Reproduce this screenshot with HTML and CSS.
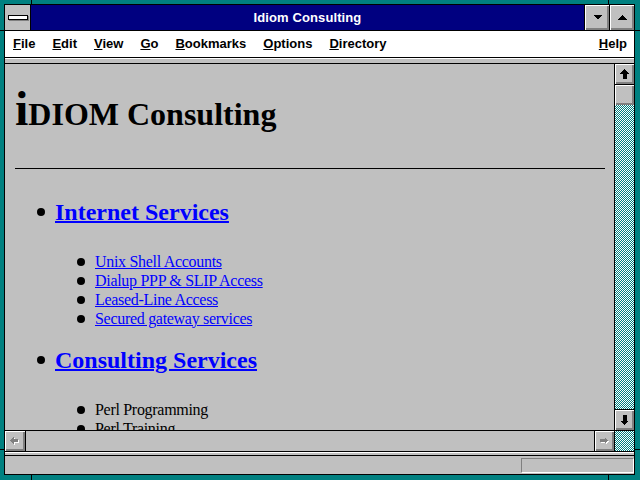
FILE: index.html
```html
<!DOCTYPE html>
<html lang="en">
<head>
  <meta charset="UTF-8">
  <title>Idiom Consulting</title>
  <link rel="stylesheet" href="styles.css">
</head>
<body>
  <svg class="defs" width="0" height="0">
    <defs>
      <pattern id="dither" width="2" height="2" patternUnits="userSpaceOnUse">
        <rect width="2" height="2" fill="#fff"/>
        <rect x="1" y="0" width="1" height="1" fill="#008080"/>
        <rect x="0" y="1" width="1" height="1" fill="#008080"/>
      </pattern>
    </defs>
  </svg>
  <div class="window">
    <div class="frame">
      <div class="titlebar">
        <div class="sysmenu"><span class="sysbar"></span></div>
        <div class="title">Idiom Consulting</div>
        <div class="tbtn raised">
          <svg width="9" height="5" viewBox="0 0 9 5" shape-rendering="crispEdges"><polygon points="0,0 9,0 4.5,4.5" fill="#000"/></svg>
        </div>
        <div class="tbtn raised">
          <svg width="9" height="5" viewBox="0 0 9 5" shape-rendering="crispEdges"><polygon points="4.5,0 9,4.5 0,4.5" fill="#000"/></svg>
        </div>
      </div>
      <div class="menubar">
        <span><u>F</u>ile</span>
        <span><u>E</u>dit</span>
        <span><u>V</u>iew</span>
        <span><u>G</u>o</span>
        <span><u>B</u>ookmarks</span>
        <span><u>O</u>ptions</span>
        <span><u>D</u>irectory</span>
        <span class="help"><u>H</u>elp</span>
      </div>
      <div class="band"></div>
      <div class="main">
        <div class="page">
          <h1><span class="big">i</span>DIOM Consulting</h1>
          <hr>
          <ul class="services">
            <li>
              <h2 class="svc"><a href="#">Internet Services</a></h2>
              <ul class="sub">
                <li><a href="#">Unix Shell Accounts</a></li>
                <li><a href="#">Dialup PPP &amp; SLIP Access</a></li>
                <li><a href="#">Leased-Line Access</a></li>
                <li><a href="#">Secured gateway services</a></li>
              </ul>
            </li>
            <li>
              <h2 class="svc"><a href="#">Consulting Services</a></h2>
              <ul class="sub">
                <li>Perl Programming</li>
                <li>Perl Training</li>
                <li>Web Page Design</li>
              </ul>
            </li>
          </ul>
        </div>
        <div class="vscroll">
          <div class="sbtn raised up">
            <svg width="9" height="10" viewBox="0 0 9 10" shape-rendering="crispEdges"><polygon points="4.5,0 9,4.5 6.5,4.5 6.5,10 2.5,10 2.5,4.5 0,4.5" fill="#000"/></svg>
          </div>
          <div class="thumb raised"></div>
          <svg class="track"><rect width="100%" height="100%" fill="url(#dither)"/></svg>
          <div class="sbtn raised down">
            <svg width="9" height="10" viewBox="0 0 9 10" shape-rendering="crispEdges"><polygon points="2.5,0 6.5,0 6.5,5.5 9,5.5 4.5,10 0,5.5 2.5,5.5" fill="#000"/></svg>
          </div>
        </div>
      </div>
      <div class="hscroll">
        <div class="sbtn raised left">
          <svg width="10" height="9" viewBox="0 0 10 9" shape-rendering="crispEdges">
            <polygon points="1,4.5 4.5,1 4.5,3 9,3 9,6 4.5,6 4.5,8" fill="#fff"/>
            <polygon points="0,3.5 3.5,0 3.5,2 8,2 8,5 3.5,5 3.5,7" fill="#808080"/>
          </svg>
        </div>
        <div class="htrack"></div>
        <div class="sbtn raised right">
          <svg width="10" height="9" viewBox="0 0 10 9" shape-rendering="crispEdges">
            <polygon points="9,4.5 5.5,1 5.5,3 1,3 1,6 5.5,6 5.5,8" fill="#fff"/>
            <polygon points="8,3.5 4.5,0 4.5,2 0,2 0,5 4.5,5 4.5,7" fill="#808080"/>
          </svg>
        </div>
        <div class="corner"><svg class="fill"><rect width="100%" height="100%" fill="url(#dither)"/></svg></div>
      </div>
      <div class="band2"></div>
      <div class="status"><div class="well"></div></div>
    </div>
  </div>
</body>
</html>
```

FILE: styles.css
```css
*{
  margin: 0;
  padding: 0;
  box-sizing: border-box;
}
body{
  background: #008080;
  font-family: "Liberation Sans", Arial, sans-serif;
  color: #000;
}
.defs{
  display: block;
  width: 0;
  height: 0;
}
/* teal frame with the little resize notches */
.window{
  width: 640px;
  height: 480px;
  padding: 4px 5px 5px 4px;
  background:
    linear-gradient(#000,#000) 31px 0/1px 4px no-repeat,
    linear-gradient(#000,#000) 608px 0/1px 4px no-repeat,
    linear-gradient(#000,#000) 31px 475px/1px 5px no-repeat,
    linear-gradient(#000,#000) 608px 475px/1px 5px no-repeat,
    linear-gradient(#000,#000) 0 30px/4px 1px no-repeat,
    linear-gradient(#000,#000) 0 449px/4px 1px no-repeat,
    linear-gradient(#000,#000) 635px 30px/5px 1px no-repeat,
    linear-gradient(#000,#000) 635px 449px/5px 1px no-repeat,
    #008080;
}
.frame{
  height: 100%;
  border: 1px solid #000;
  background: #c0c0c0;
  display: flex;
  flex-direction: column;
}
.raised{
  background: #c0c0c0;
  box-shadow: inset 1px 1px 0 #fff, inset -1px -1px 0 #808080, inset -2px -2px 0 #808080;
}
.titlebar{
  height: 26px;
  flex: none;
  display: flex;
  border-bottom: 1px solid #000;
}
.sysmenu{
  width: 26px;
  border-right: 1px solid #000;
  background: #c0c0c0;
  display: flex;
  align-items: center;
  justify-content: center;
}
.sysbar{
  width: 20px;
  height: 5px;
  background: #fff;
  border: 1px solid #000;
  box-shadow: 1px 1px 0 #808080;
}
.title{
  flex: 1;
  background: #000080;
  color: #fff;
  font-weight: bold;
  font-size: 13px;
  line-height: 25px;
  text-align: center;
  letter-spacing: 0.1px;
}
.tbtn{
  width: 25px;
  border-left: 1px solid #000;
  display: flex;
  align-items: center;
  justify-content: center;
}
.menubar{
  height: 27px;
  flex: none;
  background: #fff;
  border-bottom: 1px solid #000;
  display: flex;
  gap: 17px;
  padding: 0 7px 0 8px;
  font-weight: bold;
  font-size: 13px;
  line-height: 26px;
}
.menubar .help{
  margin-left: auto;
}
.band{
  height: 6px;
  flex: none;
  border-top: 1px solid #fff;
  border-bottom: 1px solid #000;
}
.main{
  height: 366px;
  flex: none;
  display: flex;
}
.page{
  flex: 1;
  overflow: hidden;
  padding: 30px 9px 0 10px;
  background: #c0c0c0;
  font-family: "Liberation Serif", "Times New Roman", serif;
}
.page h1{
  font-size: 32px;
  line-height: 40px;
  font-weight: bold;
}
.page h1 .big{
  font-size: 48px;
  line-height: 0;
}
.page hr{
  border: 0;
  border-top: 1px solid #000;
  margin: 34px 0 28px;
}
.page a{
  color: #0000ff;
  text-decoration: underline;
}
.services{
  list-style: none;
}
.services > li + li{
  margin-top: 17px;
}
.svc{
  display: flex;
  align-items: center;
  font-size: 24px;
  line-height: 30px;
  font-weight: bold;
}
.svc a{
  text-decoration-thickness: 2px;
}
.svc::before{
  content: "";
  flex: none;
  width: 8px;
  height: 8px;
  border-radius: 50%;
  background: #000;
  margin: 0 10px 0 22px;
}
.sub{
  list-style: none;
  padding-top: 25px;
}
.sub li{
  display: flex;
  align-items: center;
  height: 19px;
  font-size: 16px;
  letter-spacing: -0.3px;
}
.sub li::before{
  content: "";
  flex: none;
  width: 8px;
  height: 8px;
  border-radius: 50%;
  background: #000;
  margin: 0 10px 0 62px;
}
.vscroll{
  width: 20px;
  flex: none;
  border-left: 1px solid #000;
  display: flex;
  flex-direction: column;
}
.sbtn{
  display: flex;
  align-items: center;
  justify-content: center;
  flex: none;
}
.sbtn.up{
  height: 21px;
  border-bottom: 1px solid #000;
}
.sbtn.down{
  height: 21px;
  border-top: 1px solid #000;
}
.thumb{
  height: 20px;
  flex: none;
}
.track{
  display: block;
  flex: 1;
  width: 19px;
}
.hscroll{
  height: 22px;
  flex: none;
  display: flex;
  border-top: 1px solid #000;
  border-bottom: 1px solid #000;
}
.sbtn.left{
  width: 21px;
  border-right: 1px solid #000;
}
.htrack{
  flex: 1;
}
.sbtn.right{
  width: 20px;
  border-left: 1px solid #000;
}
.corner{
  width: 20px;
  border-left: 1px solid #000;
}
.corner .fill{
  display: block;
  width: 100%;
  height: 100%;
}
.band2{
  height: 4px;
  flex: none;
  border-top: 1px solid #fff;
  border-bottom: 1px solid #000;
}
.status{
  flex: 1;
  display: flex;
  justify-content: flex-end;
  padding: 2px 0 1px 0;
}
.well{
  width: 113px;
  border: 1px solid;
  border-color: #808080 #fff #fff #808080;
}
```
